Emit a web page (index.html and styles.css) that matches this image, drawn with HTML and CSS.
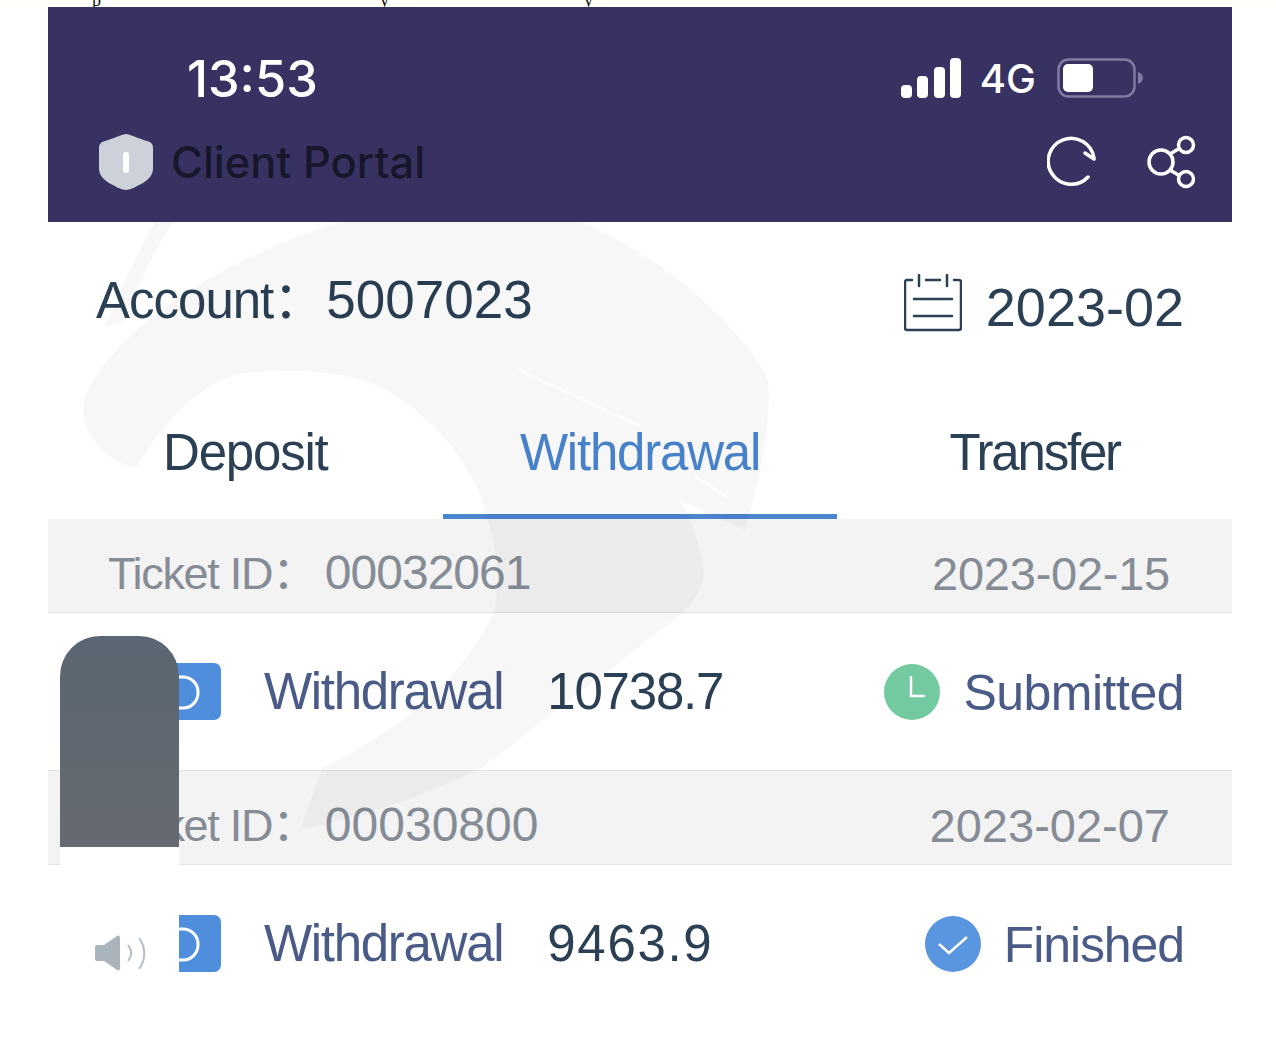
FILE: index.html
```html
<!DOCTYPE html>
<html lang="en">
<head>
    <meta charset="UTF-8">
    <meta name="viewport" content="width=device-width, initial-scale=1.0">
    <title>Client Portal</title>
    <link rel="stylesheet" href="styles.css">
</head>
<body>

    <p class="cut-line"><span class="cut-a">p</span><span class="cut-b">y</span><span class="cut-c">y</span></p>

    <div class="shot">
        <header class="top">
            <div class="status">
                <span class="time">13:53</span>
                <div class="status-right">
                    <svg class="signal" viewBox="0 0 60 40" width="60" height="40">
                        <rect x="0" y="27" width="11" height="13" rx="4"/>
                        <rect x="16" y="18" width="11" height="22" rx="4"/>
                        <rect x="33" y="9" width="11" height="31" rx="4"/>
                        <rect x="49" y="0" width="11" height="40" rx="4"/>
                    </svg>
                    <span class="net">4G</span>
                    <svg class="battery" viewBox="0 0 86 40" width="86" height="40">
                        <rect x="1.5" y="1.5" width="76" height="37" rx="10" fill="none" stroke="#7f7ba3" stroke-width="2.5"/>
                        <rect x="6" y="6" width="30" height="28" rx="5" fill="#fff"/>
                        <path d="M81 14c3 1 5 3 5 6s-2 5-5 6z" fill="#7f7ba3"/>
                    </svg>
                </div>
            </div>
            <div class="portal">
                <svg class="shield" viewBox="0 0 54 56" width="54" height="56">
                    <path d="M27 0c3 0 14 5 21 7 4 1 6 3 6 7v20c0 7-4 11-10 15-6 3-12 7-17 7s-11-4-17-7C4 45 0 41 0 34V14c0-4 2-6 6-7 7-2 18-7 21-7z" fill="#cdd2da"/>
                    <rect x="24" y="18" width="6" height="21" rx="3" fill="#fff"/>
                </svg>
                <span class="portal-name">Client Portal</span>
                <div class="portal-actions">
                    <svg class="refresh" viewBox="0 0 50 52" width="50" height="52" fill="none" stroke="#fff" stroke-width="3.5" stroke-linecap="round">
                        <path d="M41 43A23 23 0 1 1 47 24"/>
                        <path d="M47 25l-9-6"/>
                    </svg>
                    <svg viewBox="0 0 50 54" width="50" height="54" fill="none" stroke="#fff" stroke-width="3.5">
                        <circle cx="14" cy="27" r="12"/>
                        <circle cx="39" cy="10" r="7.5"/>
                        <circle cx="39" cy="44" r="7.5"/>
                        <path d="M23 19l10-6M23 35l10 6"/>
                    </svg>
                </div>
            </div>
        </header>

        <main class="content">
            <svg class="watermark" viewBox="48 222 1184 776" width="1184" height="776">
                <path d="M339 222C220 260 110 330 84 400C78 430 104 462 136 468C166 418 206 378 246 373C306 367 366 371 406 403C446 433 476 473 486 513C498 553 500 583 494 613C464 673 414 723 322 768L300 830C370 815 440 790 483 767L683 613C700 595 706 580 703 567C700 540 690 520 680 500L745 530C760 480 772 420 768 380C740 320 650 250 581 222Z"/>
                <path d="M155 222c-18 30-35 70-50 105l18-6c14-30 30-70 50-99z"/>
                <path class="watermark-gap" d="M518 370L640 426M694 476L727 497"/>
            </svg>

            <div class="account">
                <div class="account-id">Account：<span class="account-num">5007023</span></div>
                <div class="account-date">
                    <svg class="calendar" viewBox="0 0 58 58" width="58" height="58" fill="none" stroke="#2b3f55" stroke-width="2.5" stroke-linecap="round">
                        <path d="M8 6H3a2 2 0 0 0-2 2v46a2 2 0 0 0 2 2h52a2 2 0 0 0 2-2V8a2 2 0 0 0-2-2h-5"/>
                        <path d="M15 1v11M43 1v11M22 6h14M10 25h38M10 42h38"/>
                    </svg>
                    <span class="date-text">2023-02</span>
                </div>
            </div>

            <nav class="tabs">
                <a class="tab" href="#">Deposit</a>
                <a class="tab tab-on" href="#">Withdrawal</a>
                <a class="tab tab-tight" href="#">Transfer</a>
            </nav>

            <section class="ticket-head">
                <div class="ticket-id"><span class="ticket-label">Ticket ID：</span><span class="ticket-num num-tight">00032061</span></div>
                <div class="ticket-date date-tight">2023-02-15</div>
            </section>
            <section class="ticket-row">
                <svg class="doc-icon" viewBox="0 0 56 57" width="56" height="57">
                    <rect width="56" height="57" rx="7" fill="#4f8edc"/>
                    <rect x="0" y="14" width="33" height="31" rx="15" fill="none" stroke="#fff" stroke-width="3"/>
                </svg>
                <span class="row-label">Withdrawal</span>
                <span class="row-amount amount-tight">10738.7</span>
                <div class="row-status">
                    <svg viewBox="0 0 56 56" width="56" height="56">
                        <circle cx="28" cy="28" r="28" fill="#73c9a0"/>
                        <path d="M27 12v20h14" fill="none" stroke="#fff" stroke-width="2.5"/>
                    </svg>
                    <span class="status-text">Submitted</span>
                </div>
            </section>

            <section class="ticket-head">
                <div class="ticket-id"><span class="ticket-label">Ticket ID：</span><span class="ticket-num">00030800</span></div>
                <div class="ticket-date">2023-02-07</div>
            </section>
            <section class="ticket-row">
                <svg class="doc-icon" viewBox="0 0 56 57" width="56" height="57">
                    <rect width="56" height="57" rx="7" fill="#4f8edc"/>
                    <rect x="0" y="14" width="33" height="31" rx="15" fill="none" stroke="#fff" stroke-width="3"/>
                </svg>
                <span class="row-label">Withdrawal</span>
                <span class="row-amount amount-wide">9463.9</span>
                <div class="row-status">
                    <svg viewBox="0 0 56 56" width="56" height="56">
                        <circle cx="28" cy="28" r="28" fill="#5a95e0"/>
                        <path d="M14 28l10 9 18-16" fill="none" stroke="#fff" stroke-width="2.5"/>
                    </svg>
                    <span class="status-text status-tight">Finished</span>
                </div>
            </section>
        </main>

        <div class="volume">
            <div class="volume-fill"></div>
            <div class="volume-rest">
                <svg viewBox="0 0 54 38" width="54" height="38">
                    <path d="M2 11h7L22 2c2-1 3 0 3 2v30c0 2-1 3-3 2L9 27H2c-1 0-2-1-2-2V13c0-1 1-2 2-2z" fill="#a9b4bd"/>
                    <path d="M33 11c4 5 4 11 0 16M44 4c7 9 7 22 0 31" fill="none" stroke="#b4bdc5" stroke-width="2"/>
                </svg>
            </div>
        </div>
    </div>

</body>
</html>
```

FILE: styles.css
```css
body {
    margin: 0;
    background-color: #fff;
    font-family: "Liberation Sans", "Noto Sans CJK SC", sans-serif;
    color: #2b3f55;
}

.cut-line {
    margin: 0;
    height: 7px;
    overflow: hidden;
    background-color: #fffffb;
    font-family: "Liberation Serif", serif;
    font-size: 18px;
    line-height: 0;
    color: #111;
}

.cut-a { margin-left: 92px; }
.cut-b { margin-left: 279px; }
.cut-c { margin-left: 195px; }

.shot {
    position: relative;
    width: 1184px;
    height: 991px;
    margin-left: 48px;
    overflow: hidden;
}

/* header */
.top {
    height: 215px;
    padding-top: 33px;
    box-sizing: border-box;
    background-color: #383262;
}

.status {
    display: flex;
    justify-content: space-between;
    align-items: center;
    height: 76px;
    padding: 0 89px 0 139px;
}

.time {
    font-family: Inter, sans-serif;
    font-size: 50.5px;
    font-weight: 500;
    color: #fff;
}

.status-right {
    display: flex;
    align-items: center;
}

.signal { fill: #fff; }

.net {
    margin: 0 21px 0 19px;
    font-family: Inter, sans-serif;
    font-size: 40px;
    font-weight: 500;
    color: #fff;
}

.portal {
    display: flex;
    align-items: center;
    height: 80px;
    margin-top: 6px;
    padding: 0 35px 0 51px;
}

.portal-name {
    margin-left: 18px;
    font-family: Inter, sans-serif;
    font-size: 43.5px;
    font-weight: 500;
    color: #17172b;
}

.portal-actions {
    display: flex;
    align-items: center;
    gap: 52px;
    margin-left: auto;
}

.refresh {
    margin: -4px -2px 0 0;
}

/* body of the page */
.content {
    position: relative;
}

.watermark {
    position: absolute;
    top: 0;
    left: 0;
    fill: rgba(0, 0, 0, 0.03);
    z-index: 1;
    pointer-events: none;
}

.watermark-gap {
    fill: none;
    stroke: rgba(255, 255, 255, 0.7);
    stroke-width: 3;
}

.account {
    display: flex;
    justify-content: space-between;
    align-items: center;
    height: 156px;
    padding: 0 48px;
}

.account-id {
    font-size: 51px;
    letter-spacing: -1px;
    line-height: 60px;
}

.account-num {
    margin-left: 3px;
    font-size: 53px;
    letter-spacing: 0;
}

.account-date {
    display: flex;
    align-items: center;
    gap: 24px;
    margin-top: 14px;
}

.calendar {
    margin-top: -8px;
}

.date-text {
    font-size: 54px;
}

.tabs {
    display: flex;
    height: 141px;
}

.tab {
    flex: 1;
    display: flex;
    justify-content: center;
    align-items: center;
    padding-top: 12px;
    border-bottom: 5px solid transparent;
    color: #2b3f55;
    font-size: 51px;
    letter-spacing: -1.2px;
    text-decoration: none;
}

.tab-on {
    color: #4a86d0;
    border-bottom-color: #4a86d0;
}

.tab-tight {
    letter-spacing: -2.2px;
}

.ticket-head {
    display: flex;
    justify-content: space-between;
    align-items: center;
    height: 94px;
    box-sizing: border-box;
    padding: 16px 62px 0 60px;
    background-color: #f3f3f3;
    border-bottom: 1px solid #e4e4e4;
    color: #858c96;
}

.ticket-id {
    font-size: 48px;
    line-height: 56px;
}

.ticket-label {
    font-size: 45px;
    letter-spacing: -1.3px;
}

.ticket-num {
    margin-left: 9px;
}

.num-tight {
    letter-spacing: -1px;
}

.ticket-date {
    font-size: 47px;
    line-height: 56px;
}

.date-tight {
    letter-spacing: -0.25px;
}

.ticket-row {
    display: flex;
    align-items: center;
    height: 158px;
    box-sizing: border-box;
    padding: 0 48px 0 117px;
    background-color: #fff;
    border-bottom: 1px solid #e4e4e4;
}

.row-label {
    margin-left: 43px;
    color: #4a5b87;
    font-size: 51px;
    letter-spacing: -1.3px;
}

.row-amount {
    margin-left: 44px;
    font-size: 51px;
}

.amount-tight {
    letter-spacing: -1.2px;
}

.amount-wide {
    letter-spacing: 1.7px;
}

.row-status {
    display: flex;
    align-items: center;
    gap: 23px;
    margin-left: auto;
}

.status-text {
    margin-top: 3px;
    color: #4a5b87;
    font-size: 50px;
    letter-spacing: -0.5px;
}

.status-tight {
    letter-spacing: -1.1px;
}

/* volume overlay */
.volume {
    position: absolute;
    top: 629px;
    left: 12px;
    z-index: 2;
    display: flex;
    flex-direction: column;
    width: 119px;
    height: 380px;
    border-radius: 40px;
    overflow: hidden;
}

.volume-fill {
    height: 211px;
    background: linear-gradient(#5a6672, #666a70);
}

.volume-rest {
    flex: 1;
    padding: 87px 0 0 35px;
    background-color: #fff;
}
```
